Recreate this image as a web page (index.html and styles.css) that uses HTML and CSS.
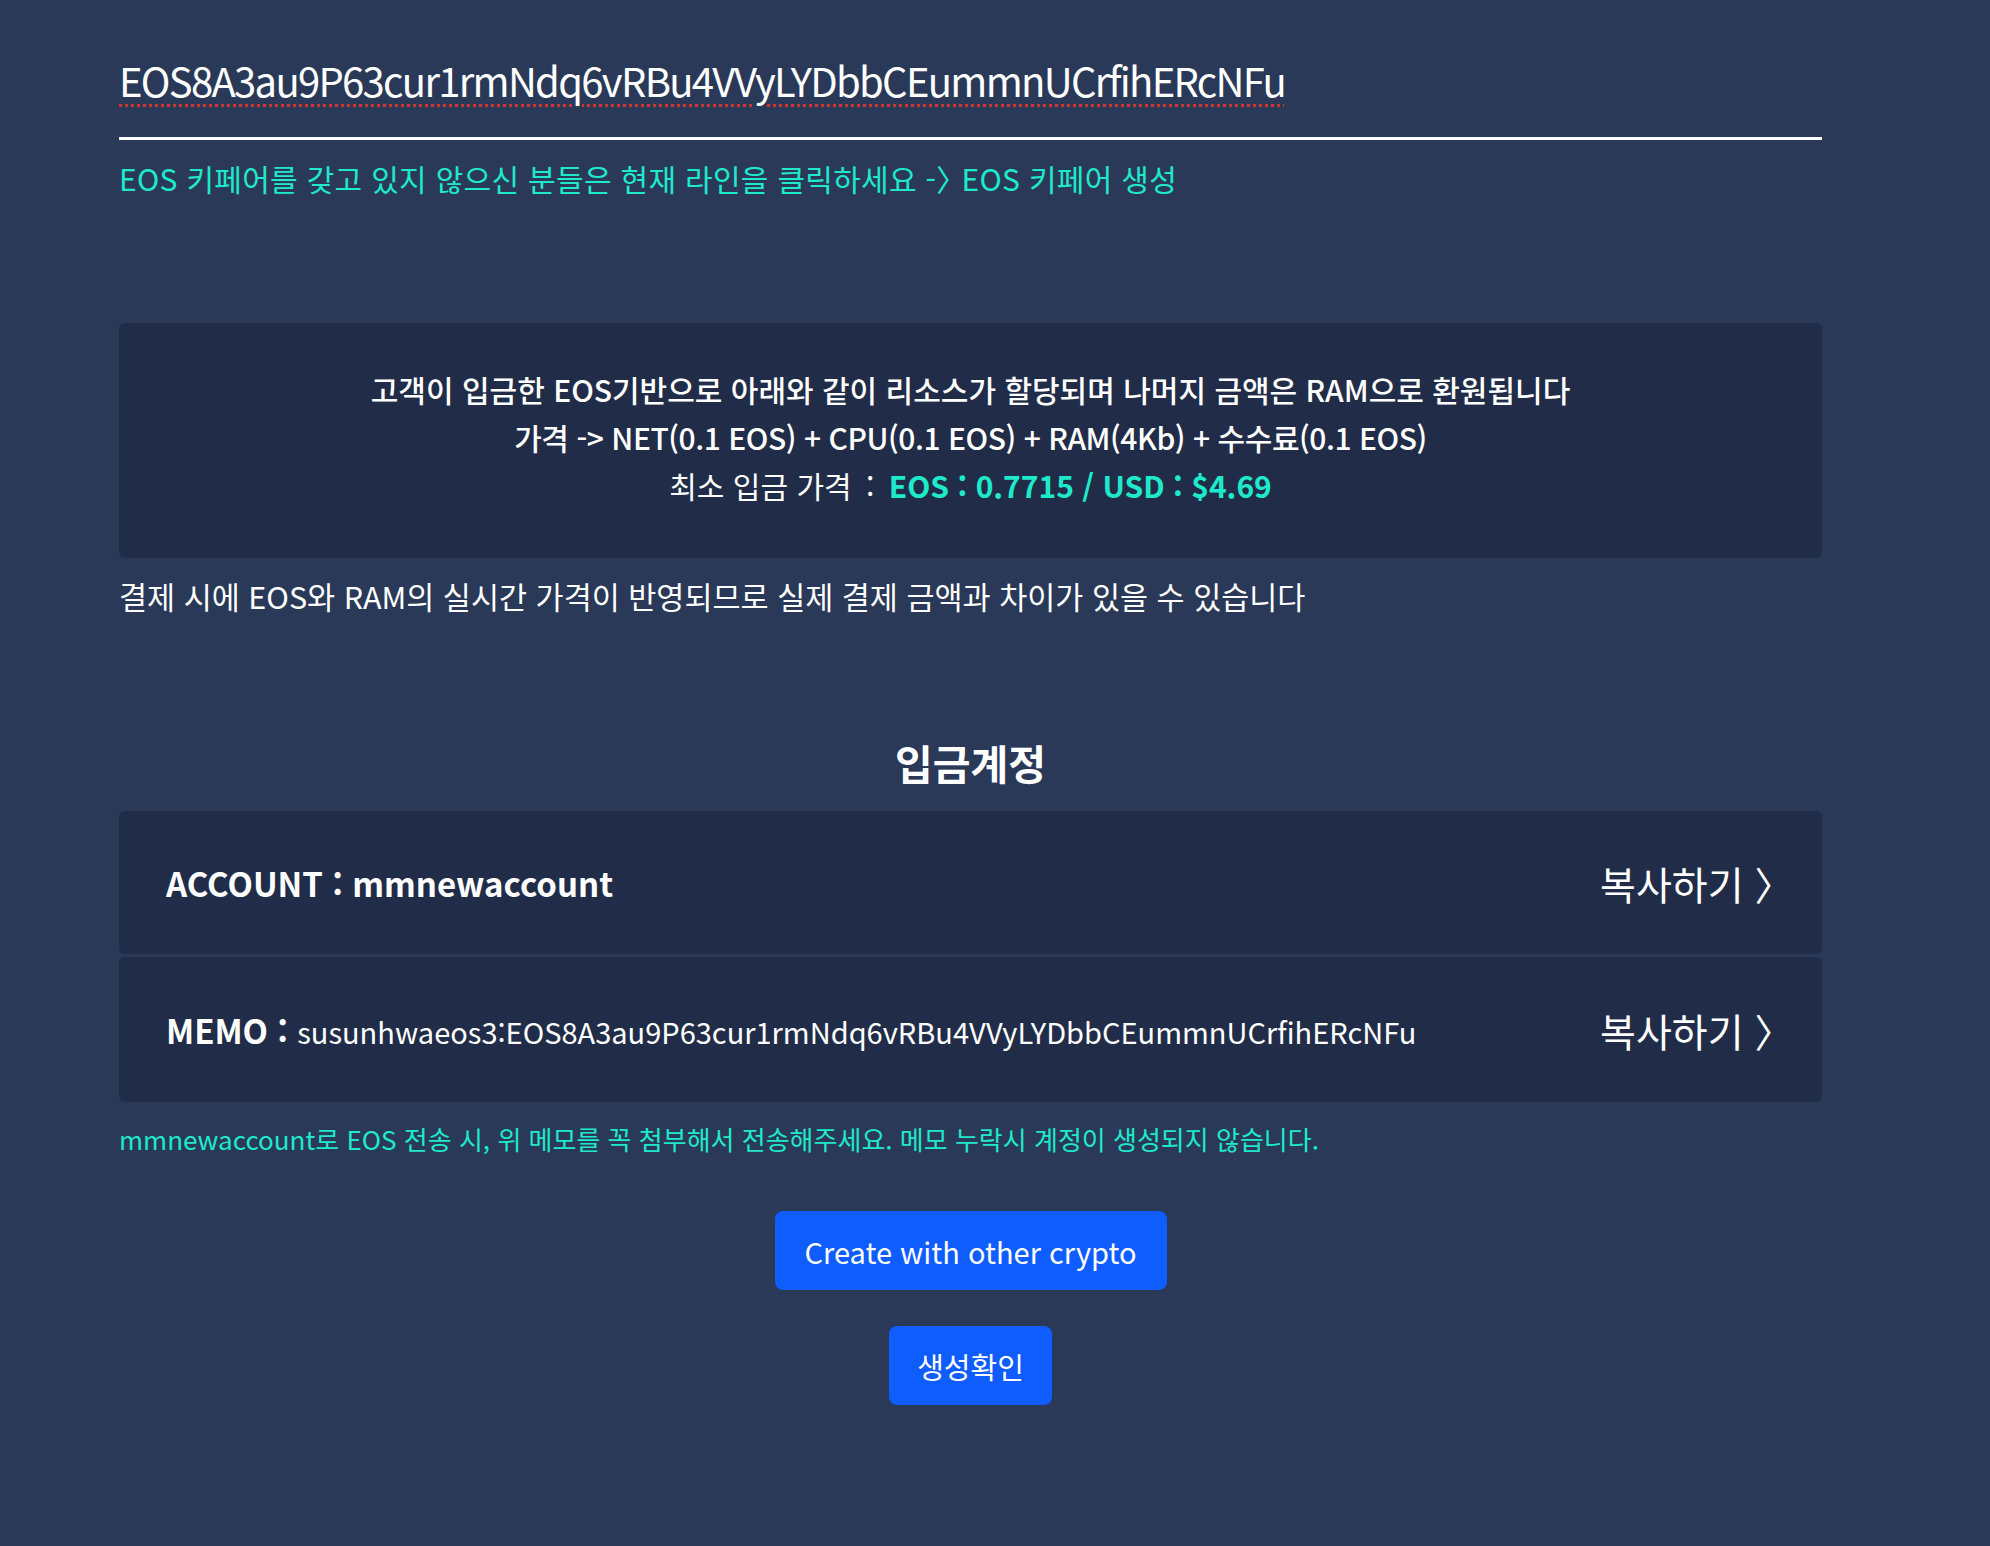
FILE: index.html
```html
<!DOCTYPE html>
<html lang="ko">
  <head>
    <meta charset="UTF-8" />
    <meta name="viewport" content="width=device-width, initial-scale=1.0">
    <title>EOS 계정 생성</title>
    <link rel="stylesheet" href="styles.css">
  </head>
  <body>
    <div class="wrap">
      <div class="key-field">
        <span class="key-text">EOS8A3au9P63cur1rmNdq6vRBu4VVyLYDbbCEummnUCrfihERcNFu</span>
      </div>
      <p class="key-help">EOS 키페어를 갖고 있지 않으신 분들은 현재 라인을 클릭하세요 -<span class="arrow">〉</span> EOS 키페어 생성</p>

      <div class="price-box">
        <p class="price-line">고객이 입금한 EOS기반으로 아래와 같이 리소스가 할당되며 나머지 금액은 RAM으로 환원됩니다</p>
        <p class="price-line tight">가격 -&gt; NET(0.1 EOS) + CPU(0.1 EOS) + RAM(4Kb) + 수수료(0.1 EOS)</p>
        <p class="price-line min">최소 입금 가격 <span class="colon">:</span> <b class="price-value">EOS : 0.7715 / USD : $4.69</b></p>
      </div>
      <p class="notice">결제 시에 EOS와 RAM의 실시간 가격이 반영되므로 실제 결제 금액과 차이가 있을 수 있습니다</p>

      <h2 class="section-title">입금계정</h2>
      <div class="account-row">
        <div class="account-info"><b>ACCOUNT : mmnewaccount</b></div>
        <a class="copy-link" href="#">복사하기 <span class="arrow">〉</span></a>
      </div>
      <div class="account-row memo">
        <div class="account-info"><b>MEMO :</b> <span class="memo-value">susunhwaeos3:EOS8A3au9P63cur1rmNdq6vRBu4VVyLYDbbCEummnUCrfihERcNFu</span></div>
        <a class="copy-link" href="#">복사하기 <span class="arrow">〉</span></a>
      </div>
      <p class="memo-help">mmnewaccount로 EOS 전송 시, 위 메모를 꼭 첨부해서 전송해주세요. 메모 누락시 계정이 생성되지 않습니다.</p>

      <div class="actions">
        <button class="btn btn-wide">Create with other crypto</button>
        <button class="btn btn-confirm">생성확인</button>
      </div>
    </div>
  </body>
</html>
```

FILE: styles.css
```css
body, html {
  margin: 0;
}

body {
  background-color: #2a3957;
  color: #fff;
  font-family: "Noto Sans CJK KR", "Noto Sans", sans-serif;
}

p {
  margin: 0;
}

.wrap {
  width: 1703px;
  margin-left: 119px;
  padding-bottom: 140px;
}

.key-field {
  padding-top: 50px;
  padding-bottom: 27px;
  border-bottom: 3px solid #fff;
  font-size: 40px;
  line-height: 60px;
}

.key-text {
  letter-spacing: -1.7px;
  text-decoration: underline dotted #d0342c;
  text-decoration-thickness: 3px;
  text-underline-offset: 7px;
}

/* full-width 〉 glyph, pulled in so it sits like a narrow arrow */
.arrow {
  letter-spacing: -0.5em;
}

.key-help {
  margin-top: 18px;
  color: #1fe9cb;
  font-size: 30px;
  line-height: 40px;
  letter-spacing: 0.3px;
}

.key-help .arrow {
  letter-spacing: -0.45em;
}

.price-box {
  margin-top: 125px;
  padding: 42px 0 49px;
  background-color: #212d48;
  border-radius: 6px;
  text-align: center;
}

.price-line {
  font-size: 30px;
  line-height: 48px;
  font-weight: 500;
}

.price-line.tight {
  letter-spacing: -0.45px;
}

.price-line.min {
  font-weight: 400;
}

.colon {
  margin: 0 6px;
}

.price-value {
  color: #1fe9cb;
  font-weight: 700;
}

.notice {
  margin-top: 20px;
  font-size: 30.5px;
  line-height: 36px;
}

.section-title {
  margin: 123px 0 24px;
  font-size: 41px;
  line-height: 50px;
  font-weight: 700;
  text-align: center;
}

.account-row {
  display: flex;
  align-items: center;
  justify-content: space-between;
  height: 143px;
  padding: 0 48px 0 47px;
  background-color: #212d48;
  border-radius: 6px;
}

.account-row.memo {
  margin-top: 3px;
  height: 145px;
}

.account-info {
  font-size: 33px;
}

.account-info b {
  font-weight: 700;
}

.memo-value {
  font-size: 29px;
  letter-spacing: 0;
}

.copy-link {
  color: #fff;
  font-size: 39px;
  text-decoration: none;
}

.memo-help {
  margin-top: 19px;
  color: #1fe9cb;
  font-size: 26px;
  line-height: 36px;
}

.actions {
  display: flex;
  flex-direction: column;
  align-items: center;
  gap: 36px;
  margin-top: 54px;
}

.btn {
  height: 79px;
  padding: 0 30px;
  border: none;
  border-radius: 8px;
  background-color: #0f5cff;
  color: #fff;
  font-family: "Noto Sans CJK KR", "Noto Sans", sans-serif;
  font-size: 29px;
  cursor: pointer;
}

.btn-confirm {
  padding: 0 28px;
}
```
